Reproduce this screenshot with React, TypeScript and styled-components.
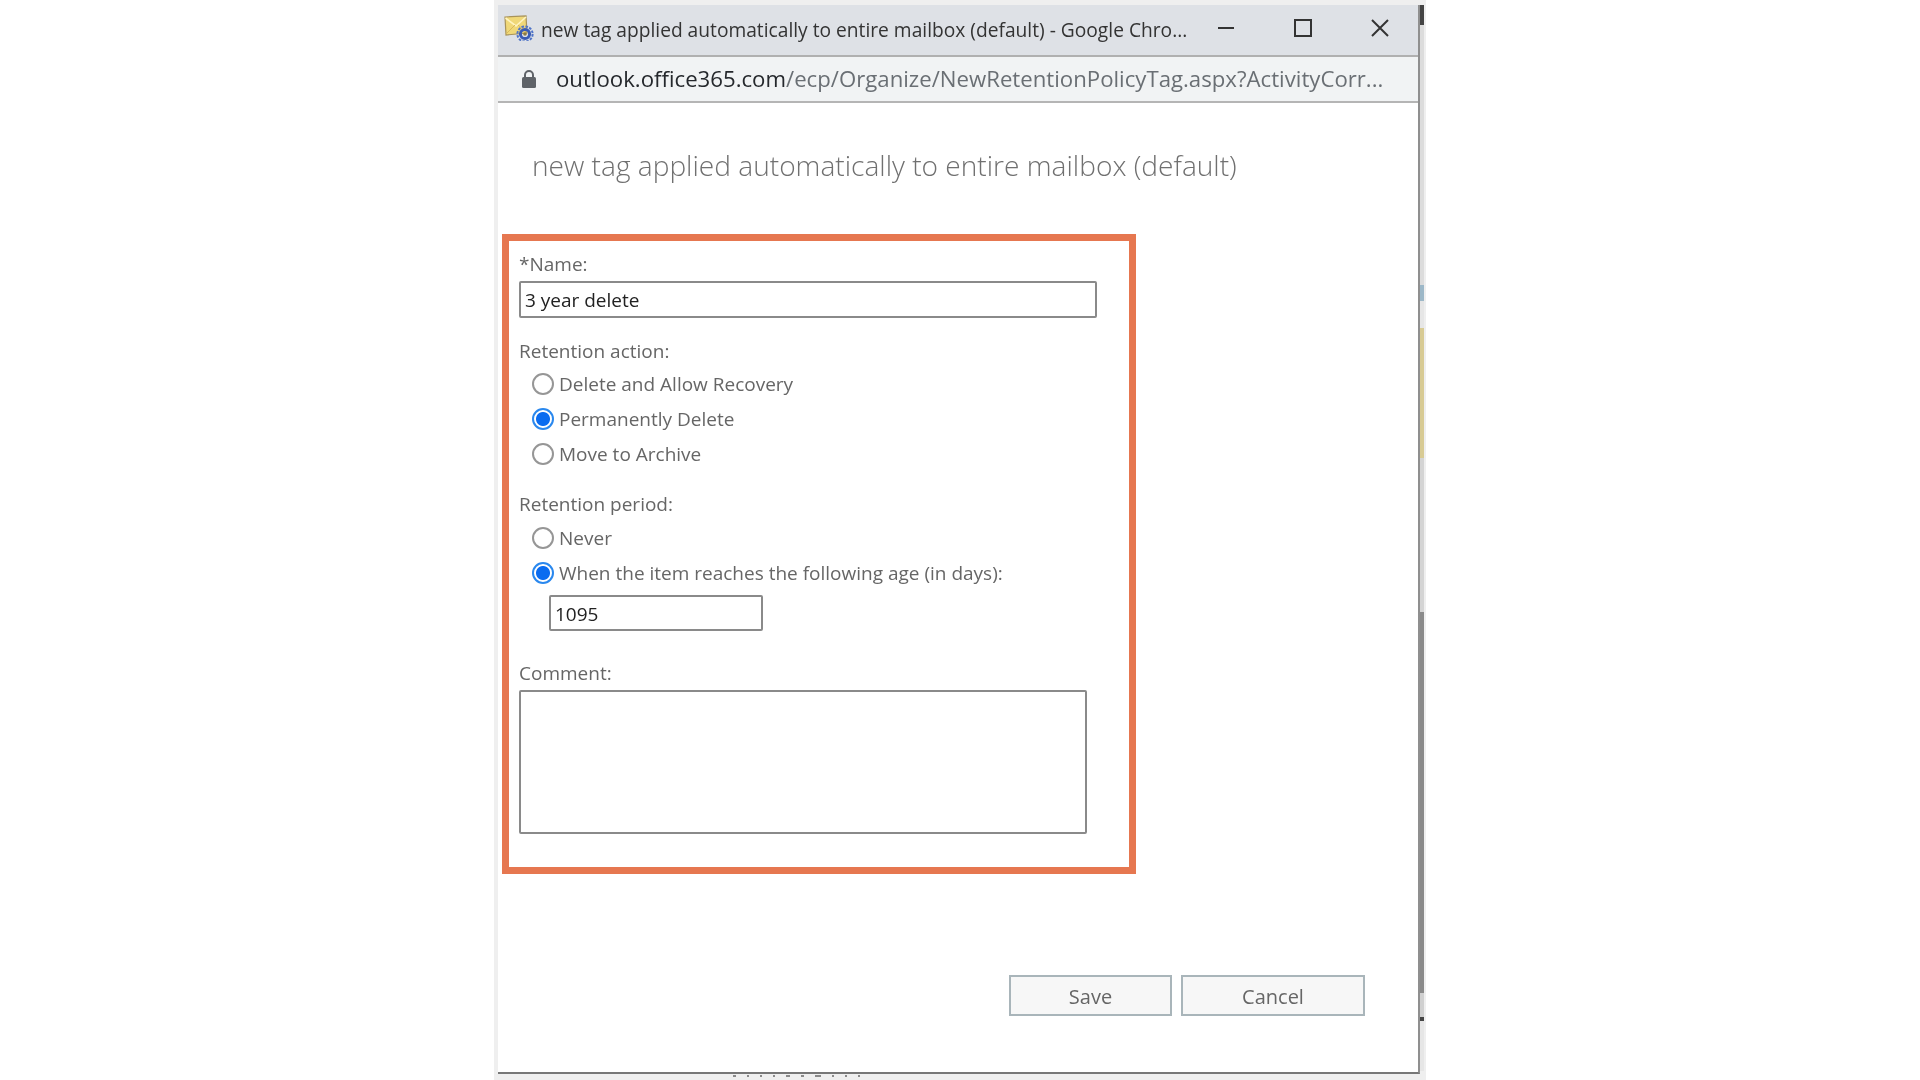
import styled, { createGlobalStyle } from 'styled-components';

const Global = createGlobalStyle`
    html, body {
        margin: 0;
        padding: 0;
        background: #fff;
    }
    * {
        box-sizing: border-box;
    }
`
const Page = styled.div`
    width: 1920px;
    height: 1080px;
    padding-left: 494px;
    overflow: hidden;
`
const Shot = styled.div`
    width: 932px;
    height: 1080px;
    background: #efefef;
    display: flex;
    flex-direction: column;
    padding: 5px 0 0 4px;
`
const Row = styled.div`
    display: flex;
`
const Win = styled.div`
    width: 922px;
    height: 1069px;
    background: #fff;
    border-right: 2px solid #8f8f8f;
    border-bottom: 2px solid #777;
    display: flex;
    flex-direction: column;
    filter: blur(0.45px);
    font-family: "Open Sans", "Noto Sans", sans-serif;
`
const TitleBar = styled.div`
    height: 52px;
    flex: none;
    background: #dee1e6;
    border-bottom: 2px solid #b0b0b0;
    display: flex;
    align-items: center;
    padding-left: 6px;
`
const TitleIcon = styled.svg`
    width: 30px;
    height: 26px;
    flex: none;
    margin-top: -4px;
`
const TitleText = styled.div`
    width: 647px;
    margin-left: 7px;
    font-size: 19.2px;
    color: #333;
    white-space: nowrap;
    flex: none;
    margin-top: -2px;
`
const WinButtons = styled.div`
    display: flex;
    margin-left: 26px;
    gap: 53px;
    margin-top: -2px;
`
const WinIcon = styled.svg`
    width: 24px;
    height: 24px;
    display: block;
    stroke: #333;
    fill: none;
    stroke-width: 2;
`
const UrlBar = styled.div`
    height: 46px;
    flex: none;
    background: #f1f3f4;
    border-bottom: 2px solid #b5b5b5;
    display: flex;
    align-items: center;
    padding-left: 24px;
`
const Lock = styled.svg`
    width: 14px;
    height: 20px;
    flex: none;
`
const Url = styled.div`
    margin: -2px 0 0 20px;
    font-size: 22.2px;
    color: #6a6f74;
    white-space: nowrap;
    & b {
        font-weight: 400;
        color: #25282c;
    }
`
const Body = styled.div`
    flex: 1;
    display: flex;
    flex-direction: column;
    padding: 0 0 0 4px;
`
const Heading = styled.h1`
    margin: 41px 0 0 30px;
    height: 42px;
    line-height: 42px;
    font-size: 28.1px;
    font-weight: 300;
    color: #707070;
    white-space: nowrap;
`
const FormBox = styled.div`
    width: 634px;
    height: 640px;
    margin-top: 48px;
    border: 7px solid #e67750;
    padding: 0 0 0 10px;
    color: #666;
    font-size: 19px;
`
const Label = styled.div<{ $top: number }>`
    height: 26px;
    line-height: 26px;
    margin-top: ${p => p.$top}px;
    white-space: nowrap;
`
const TextField = styled.div<{ $w: number; $h: number; $left?: number; $top?: number }>`
    width: ${p => p.$w}px;
    height: ${p => p.$h}px;
    margin-left: ${p => p.$left || 0}px;
    margin-top: ${p => p.$top || 0}px;
    border: 2px solid #8a8a8a;
    border-radius: 2px;
    background: #fff;
    color: #222;
    padding-left: 4px;
    line-height: ${p => p.$h - 2}px;
`
const RadioRow = styled.label<{ $top?: number }>`
    display: flex;
    align-items: center;
    height: 35px;
    margin-top: ${p => p.$top || 0}px;
    padding-left: 13px;
    white-space: nowrap;
`
const Radio = styled.input`
    appearance: none;
    width: 22px;
    height: 22px;
    margin: 0 5px 0 0;
    border: 2px solid #969696;
    border-radius: 50%;
    background: #fff;
    flex: none;
    &:checked {
        border-color: #2a88ee;
        background: radial-gradient(circle, #0a6cf0 0 6.5px, #fff 7.5px);
    }
`
const Footer = styled.div`
    display: flex;
    gap: 9px;
    margin: 101px 0 0 507px;
`
const Btn = styled.button<{ $w: number }>`
    width: ${p => p.$w}px;
    height: 41px;
    background: #f7f7f7;
    border: 2px solid #a9b5ba;
    color: #666;
    font-family: inherit;
    font-size: 20px;
    padding: 2px 0 0;
`
const Sliver = styled.div`
    width: 4px;
    display: flex;
    flex-direction: column;
    filter: blur(0.5px);
`
const Seg = styled.div<{ $h: number; $c: string }>`
    height: ${p => p.$h}px;
    flex: none;
    background: ${p => p.$c};
`
const Flecks = styled.div`
    display: flex;
    gap: 11px;
    height: 2px;
    margin: 1px 0 0 235px;
    filter: blur(0.5px);
`
const Fleck = styled.span<{ $w: number }>`
    width: ${p => p.$w}px;
    height: 2px;
    background: #8a8a8a;
`

const sliverParts = [
    { h: 20, c: '#444' },
    { h: 260, c: '#dcdcdc' },
    { h: 16, c: '#9db8c8' },
    { h: 27, c: '#e6e6e6' },
    { h: 130, c: '#d8cb94' },
    { h: 154, c: '#d4d4d4' },
    { h: 381, c: '#8a8a8a' },
    { h: 24, c: '#d0d0d0' },
    { h: 4, c: '#444' },
    { h: 50, c: '#e6e6e6' },
]
const fleckParts = [3, 2, 2, 2, 4, 3, 6, 2, 2, 2]

function App() {
    return (
        <Page>
            <Global />
            <Shot>
                <Row>
                    <Win>
                        <TitleBar>
                            <TitleIcon viewBox="0 0 30 26">
                                <path d="M1 2 L22 1 L23 18 L2 20 Z" fill="#f0d878" stroke="#a8935a" strokeWidth="1.2" />
                                <path d="M1.5 3 L12 11 L22 2" fill="none" stroke="#fff4c0" strokeWidth="1.6" />
                                <path d="M2 19 L11 10 M22 17 L14 10" fill="none" stroke="#d9b95a" strokeWidth="1" />
                                <circle cx="21" cy="19" r="7.6" fill="none" stroke="#4f74c8" strokeWidth="2" strokeDasharray="2.6 1.4" />
                                <circle cx="21" cy="19" r="4.6" fill="none" stroke="#3a5cb4" strokeWidth="3" />
                                <circle cx="21" cy="19" r="1.8" fill="#8a7a44" />
                            </TitleIcon>
                            <TitleText>new tag applied automatically to entire mailbox (default) - Google Chro...</TitleText>
                            <WinButtons>
                                <WinIcon viewBox="0 0 24 24"><path d="M4 11h16" /></WinIcon>
                                <WinIcon viewBox="0 0 24 24"><rect x="4" y="3" width="16" height="16" /></WinIcon>
                                <WinIcon viewBox="0 0 24 24"><path d="M4 3l16 16M20 3L4 19" /></WinIcon>
                            </WinButtons>
                        </TitleBar>
                        <UrlBar>
                            <Lock viewBox="0 0 14 20">
                                <path d="M3 9V6a4 4 0 0 1 8 0v3" fill="none" stroke="#5f6368" strokeWidth="2" />
                                <rect x="0" y="8" width="14" height="11" rx="1.5" fill="#5f6368" />
                            </Lock>
                            <Url><b>outlook.office365.com</b>/ecp/Organize/NewRetentionPolicyTag.aspx?ActivityCorr...</Url>
                        </UrlBar>
                        <Body>
                            <Heading>new tag applied automatically to entire mailbox (default)</Heading>
                            <FormBox>
                                <Label $top={10}>*Name:</Label>
                                <TextField $w={578} $h={37} $top={4}>3 year delete</TextField>
                                <Label $top={20}>Retention action:</Label>
                                <RadioRow $top={2}><Radio type="radio" readOnly />Delete and Allow Recovery</RadioRow>
                                <RadioRow><Radio type="radio" checked readOnly />Permanently Delete</RadioRow>
                                <RadioRow><Radio type="radio" readOnly />Move to Archive</RadioRow>
                                <Label $top={20}>Retention period:</Label>
                                <RadioRow $top={3}><Radio type="radio" readOnly />Never</RadioRow>
                                <RadioRow><Radio type="radio" checked readOnly />When the item reaches the following age (in days):</RadioRow>
                                <TextField $w={214} $h={36} $left={30} $top={5}>1095</TextField>
                                <Label $top={29}>Comment:</Label>
                                <TextField $w={568} $h={144} $top={4} />
                            </FormBox>
                            <Footer>
                                <Btn $w={163}>Save</Btn>
                                <Btn $w={184}>Cancel</Btn>
                            </Footer>
                        </Body>
                    </Win>
                    <Sliver>
                        {sliverParts.map((s, i) => <Seg key={i} $h={s.h} $c={s.c} />)}
                    </Sliver>
                </Row>
                <Flecks>
                    {fleckParts.map((w, i) => <Fleck key={i} $w={w} />)}
                </Flecks>
            </Shot>
        </Page>
    )
}

export default App;
